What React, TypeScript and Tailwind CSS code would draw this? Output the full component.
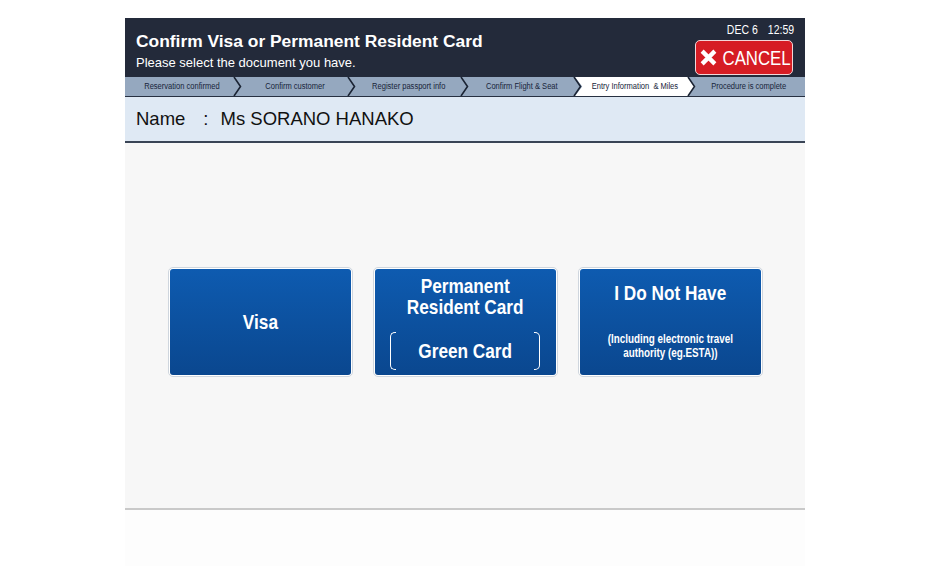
const SANS = "font-['Liberation_Sans',Arial,sans-serif]";
// no narrow face installed, so squeeze Liberation Sans horizontally
const NARROW = 'inline-block scale-x-[0.82]';

const STEPS = [
  'Reservation confirmed',
  'Confirm customer',
  'Register passport info',
  'Confirm Flight & Seat',
  'Entry Information  & Miles',
  'Procedure is complete',
];
const ACTIVE = 4;

function Chevron() {
  return (
    <svg className="absolute -right-[4px] top-0 z-10 h-full w-[9px]" viewBox="0 0 9 19" preserveAspectRatio="none">
      <polyline points="1,0 7.5,9.5 1,19" fill="none" stroke="#1b2434" strokeWidth="1.6" />
    </svg>
  );
}

function Steps() {
  return (
    <div className="grid h-[20px] grid-cols-6 border-b-[1.5px] border-[#273041] bg-[#95a8bf]">
      {STEPS.map((s, i) => (
        <div key={s} className="relative flex items-center justify-center">
          {i === ACTIVE ? (
            <svg className="absolute -left-[3px] top-0 h-full w-[calc(100%+7px)]" viewBox="0 0 100 19" preserveAspectRatio="none">
              <polygon points="0,0 94,0 100,9.5 94,19 0,19 6,9.5" fill="#ffffff" />
            </svg>
          ) : null}
          <span className={`relative inline-block scale-x-[0.9] whitespace-pre text-[8.4px] text-[#17243a] ${SANS}`}>{s}</span>
          {i < STEPS.length - 1 ? <Chevron /> : null}
        </div>
      ))}
    </div>
  );
}

function Choice({ children }: { children: React.ReactNode }) {
  return (
    <button type="button" className="h-[110px] w-[185px] rounded-[5px] border border-[#cfd6de] bg-white p-[1px]">
      <div className={`flex h-full w-full flex-col items-center rounded-[3px] bg-linear-to-b from-[#0e5bb0] to-[#0a478f] text-white ${SANS}`}>
        {children}
      </div>
    </button>
  );
}

export default function App() {
  return (
    <div className="h-[575px] w-[930px] overflow-hidden bg-white">
      <div className="ml-[125px] mt-[18px] flex w-[680px] flex-col">
        {/* header */}
        <div className="flex h-[59px] justify-between bg-[#232a3a] pl-[11px] pr-[11px]">
          <div className="pt-[13px] text-white">
            <div className={`text-[17.4px] font-bold leading-[20px] ${SANS}`}>Confirm Visa or Permanent Resident Card</div>
            <div className={`mt-[4px] text-[13px] leading-[16px] ${SANS}`}>Please select the document you have.</div>
          </div>
          <div className="flex flex-col items-end">
            <div className={`mt-[5px] flex origin-right scale-x-[0.84] gap-[12px] text-[12.5px] leading-[14px] text-white ${SANS}`}>
              <span>DEC 6</span>
              <span>12:59</span>
            </div>
            <button
              type="button"
              className={`mr-[1px] mt-[3px] flex h-[35px] w-[98px] items-center justify-center gap-[4px] rounded-[5px] border-[1.5px] border-[#f3d6d8] bg-[#d61c24] pl-[4px] text-white ${SANS}`}
            >
              <svg className="flex-none" width="17" height="17" viewBox="0 0 16 16">
                <path d="M2 2 L14 14 M14 2 L2 14" stroke="#fff" strokeWidth="4" />
              </svg>
              <span className="-mx-[7px] inline-block scale-x-[0.8] text-[21px] leading-none">CANCEL</span>
            </button>
          </div>
        </div>

        <Steps />

        {/* name band */}
        <div className={`flex h-[46px] items-center border-b-2 border-[#3a4556] bg-[#dfe9f4] pl-[11px] text-[18.5px] text-[#111] ${SANS}`}>
          <span>Name</span>
          <span className="ml-[18px]">:</span>
          <span className="ml-[12px]">Ms SORANO HANAKO</span>
        </div>

        {/* choices */}
        <div className="flex h-[367px] items-center justify-center gap-[20px] border-b-2 border-[#c9c9c9] bg-[#f7f7f7] pb-[8px]">
          <Choice>
            <div className="flex flex-1 items-center text-[21px] font-bold">
              <span className={NARROW}>Visa</span>
            </div>
          </Choice>
          <Choice>
            <div className={`mt-[6px] text-center text-[21px] font-bold leading-[21px] ${NARROW}`}>
              Permanent
              <br />
              Resident Card
            </div>
            <div className="mt-[15px] flex h-[38px] w-[150px] items-center justify-between">
              <div className="h-full w-[6px] rounded-l-[5px] border-y-[1.5px] border-l-[1.5px] border-white" />
              <span className={`text-[21px] font-bold ${NARROW}`}>Green Card</span>
              <div className="h-full w-[6px] rounded-r-[5px] border-y-[1.5px] border-r-[1.5px] border-white" />
            </div>
          </Choice>
          <Choice>
            <div className={`mt-[12px] text-[21px] font-bold leading-[24px] ${NARROW}`}>I Do Not Have</div>
            <div className={`mt-[27px] text-center text-[12px] font-bold leading-[14px] ${NARROW}`}>
              (Including electronic travel
              <br />
              authority (eg.ESTA))
            </div>
          </Choice>
        </div>

        <div className="h-[56px] bg-[#fdfdfd]" />
      </div>
    </div>
  );
}
